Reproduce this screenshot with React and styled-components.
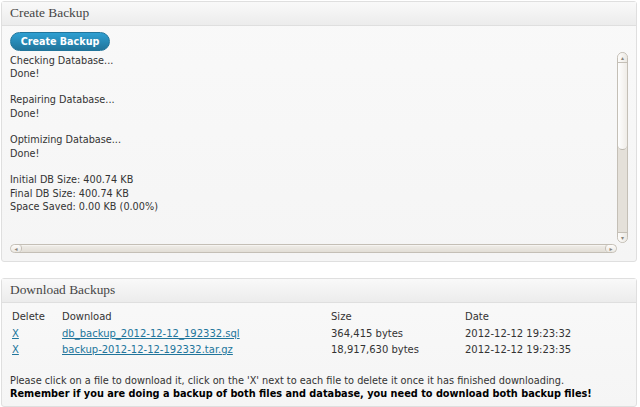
import React from 'react';
import styled, { createGlobalStyle } from 'styled-components';

const GlobalStyle = createGlobalStyle`
    body {
        margin: 0;
        background: #fff;
        font-family: "DejaVu Sans", Verdana, sans-serif;
        font-size: 10px;
        color: #333;
    }
`

const log = [
    'Checking Database...',
    'Done!',
    '',
    'Repairing Database...',
    'Done!',
    '',
    'Optimizing Database...',
    'Done!',
    '',
    'Initial DB Size: 400.74 KB',
    'Final DB Size: 400.74 KB',
    'Space Saved: 0.00 KB (0.00%)',
];

const backups = [
    { file: 'db_backup_2012-12-12_192332.sql', size: '364,415 bytes', date: '2012-12-12 19:23:32' },
    { file: 'backup-2012-12-12-192332.tar.gz', size: '18,917,630 bytes', date: '2012-12-12 19:23:35' },
];

export default function App() {
    return (
        <Page>
            <GlobalStyle />

            <Panel>
                <PanelHeader>Create Backup</PanelHeader>
                <PanelBody top={6} bottom={8}>
                    <BlueButton>Create Backup</BlueButton>
                    <ScrollBox>
                        <LogText>
                            {log.map((line, i) => <LogLine key={i}>{line}</LogLine>)}
                        </LogText>
                        <VScroll>
                            <VCap top>▴</VCap>
                            <VThumb />
                            <VTrack />
                            <VCap>▾</VCap>
                        </VScroll>
                        <HScroll>
                            <HCap>◂</HCap>
                            <HThumb />
                            <HCap right>▸</HCap>
                        </HScroll>
                    </ScrollBox>
                </PanelBody>
            </Panel>

            <Panel gap={16}>
                <PanelHeader>Download Backups</PanelHeader>
                <PanelBody top={6} bottom={5}>
                    <Table>
                        <Cell>Delete</Cell>
                        <Cell>Download</Cell>
                        <Cell>Size</Cell>
                        <Cell>Date</Cell>
                        {backups.map(b => (
                            <React.Fragment key={b.file}>
                                <Cell><Link href="#">X</Link></Cell>
                                <Cell><Link href="#">{b.file}</Link></Cell>
                                <Cell>{b.size}</Cell>
                                <Cell>{b.date}</Cell>
                            </React.Fragment>
                        ))}
                    </Table>
                    <Note>
                        Please click on a file to download it, click on the 'X' next to each file to delete it once it has finished downloading.
                        <br />
                        <strong>Remember if you are doing a backup of both files and database, you need to download both backup files!</strong>
                    </Note>
                </PanelBody>
            </Panel>
        </Page>
    );
}

const Page = styled.div`
    padding: 1px 0 0 1px;
`

const Panel = styled.div`
    width: 634px;
    margin-top: ${p => p.gap || 0}px;
    border: 1px solid #dfdfdf;
    border-radius: 3px;
    background: linear-gradient(to bottom, #f9f9f9, #f5f5f5);
`

const PanelHeader = styled.div`
    height: 23px;
    line-height: 21px;
    padding-left: 8px;
    border-bottom: 1px solid #dfdfdf;
    background: linear-gradient(to bottom, #f9f9f9, #ececec);
    font-family: "Liberation Serif", "Times New Roman", serif;
    font-size: 13.4px;
    color: #464646;
`

const PanelBody = styled.div`
    display: flex;
    flex-direction: column;
    align-items: flex-start;
    padding: ${p => p.top}px 8px ${p => p.bottom}px 8px;
`

const BlueButton = styled.button`
    width: 100px;
    height: 19px;
    margin-bottom: 1px;
    padding: 0;
    border: 1px solid #21759b;
    border-radius: 10px;
    background: linear-gradient(to bottom, #2e9fd2, #21759b);
    color: #fff;
    font-family: "DejaVu Sans", Verdana, sans-serif;
    font-size: 9.6px;
    font-weight: bold;
    line-height: 17px;
`

const ScrollBox = styled.div`
    display: grid;
    grid-template-columns: 1fr 11px;
    grid-template-rows: 191px 10px;
    width: 618px;
`

const LogText = styled.div`
    padding-top: 1.5px;
    font-size: 9.7px;
    line-height: 13.33px;
    overflow: hidden;
`

const LogLine = styled.div`
    height: 13.33px;
`

const VScroll = styled.div`
    display: flex;
    flex-direction: column;
    border: 1px solid #c4bfb6;
    border-radius: 6px;
    background: #e4e0d9;
    overflow: hidden;
`

const VCap = styled.div`
    height: 9px;
    flex: none;
    background: linear-gradient(to right, #fdfcfb, #ebe8e2);
    border-${p => p.top ? 'bottom' : 'top'}: 1px solid #c4bfb6;
    color: #8a857d;
    font-size: 6px;
    line-height: 9px;
    text-align: center;
`

const VThumb = styled.div`
    height: 86px;
    flex: none;
    background: linear-gradient(to right, #fefefe, #efece7);
    border-bottom: 1px solid #bcb7ae;
    border-radius: 0 0 5px 5px;
`

const VTrack = styled.div`
    flex: 1;
`

const HScroll = styled.div`
    display: flex;
    margin-top: 1px;
    border: 1px solid #c4bfb6;
    border-radius: 5px;
    background: #e9e6e0;
    overflow: hidden;
`

const HCap = styled.div`
    width: 10px;
    flex: none;
    background: linear-gradient(to bottom, #fdfcfb, #ebe8e2);
    border-${p => p.right ? 'left' : 'right'}: 1px solid #c4bfb6;
    border-radius: 4px;
    color: #8a857d;
    font-size: 6px;
    line-height: 8px;
    text-align: center;
`

const HThumb = styled.div`
    flex: 1;
    border-top: 1px solid #f6f4f1;
    background: linear-gradient(to bottom, #eeebe6, #e2ded6);
`

const Table = styled.div`
    display: grid;
    grid-template-columns: 50px 269px 134px 1fr;
    grid-auto-rows: 16.67px;
    width: 100%;
    align-items: center;
`

const Cell = styled.div`
    padding-left: 2px;
    line-height: 16.67px;
    white-space: nowrap;
`

const Link = styled.a`
    color: #21759b;
    text-decoration: underline;
`

const Note = styled.p`
    margin: 15px 0 0;
    font-size: 9.75px;
    line-height: 13.33px;
    white-space: nowrap;

    strong {
        color: #000;
    }
`
